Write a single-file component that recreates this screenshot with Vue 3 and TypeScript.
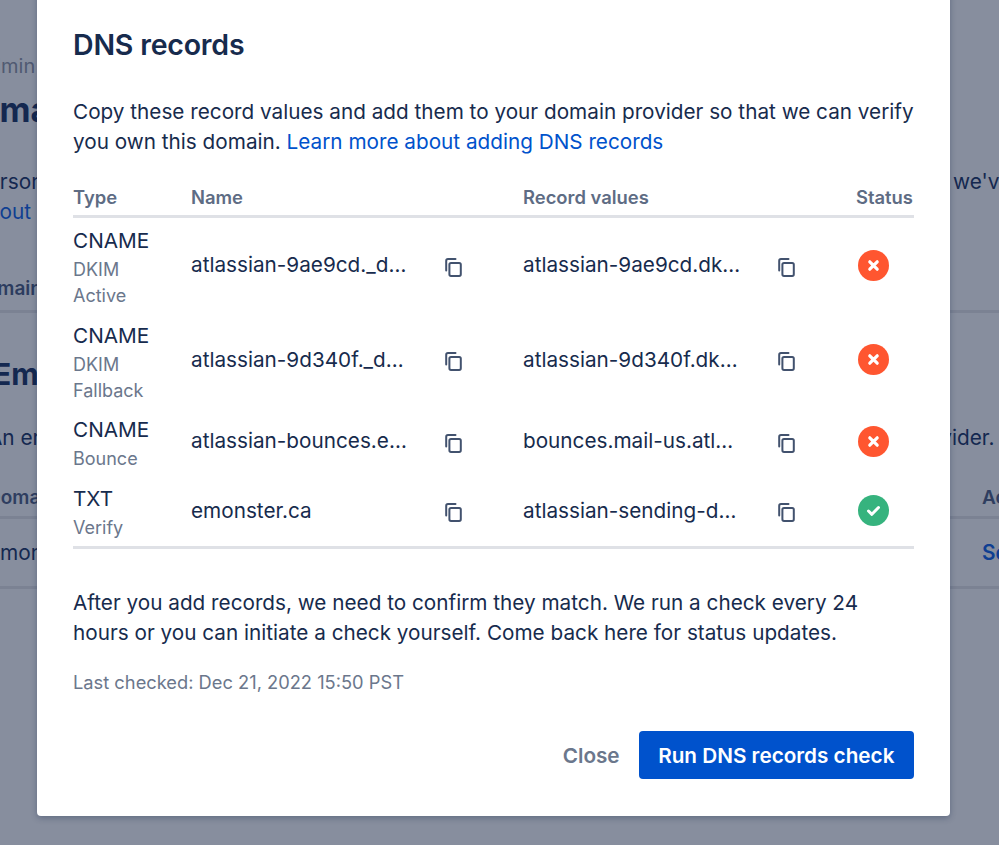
<script setup lang="ts">
interface Rec { type: string; subs: string[]; name: string; value: string; ok: boolean }
const records: Rec[] = [
  { type: 'CNAME', subs: ['DKIM', 'Active'], name: 'atlassian-9ae9cd._domainkey.emonster.ca', value: 'atlassian-9ae9cd.dkim.atlassian.net', ok: false },
  { type: 'CNAME', subs: ['DKIM', 'Fallback'], name: 'atlassian-9d340f._domainkey.emonster.ca', value: 'atlassian-9d340f.dkim.atlassian.net', ok: false },
  { type: 'CNAME', subs: ['Bounce'], name: 'atlassian-bounces.emonster.ca', value: 'bounces.mail-us.atlassian.net', ok: false },
  { type: 'TXT', subs: ['Verify'], name: 'emonster.ca', value: 'atlassian-sending-domain-verification=1', ok: true },
]
</script>

<template>
  <div class="page">
    <div class="bg">
      <div class="crumb">Admin</div>
      <h1 class="bg-h1">Domains</h1>
      <div class="bg-row intro"><span class="l-person">personal</span><span class="r-weve">we've</span></div>
      <div class="bg-row intro2"><a class="l-out">about</a></div>
      <div class="bg-row tabhead"><span class="l-mail">Domain</span></div>
      <h2 class="bg-h2">Email</h2>
      <div class="bg-row intro3"><span class="l-an">An email</span><span class="r-vider">provider.</span></div>
      <div class="bg-row thead"><span class="l-dom">Domain</span><span class="r-ac">Actions</span></div>
      <div class="bg-row tbody"><span class="l-emon">emonster</span><a class="r-se">See</a></div>
    </div>

    <section class="modal">
      <h3 class="title">DNS records</h3>
      <p class="para">
        Copy these record values and add them to your domain provider so that we can verify
        you own this domain. <a class="link">Learn more about adding DNS records</a>
      </p>
      <table class="table">
        <colgroup>
          <col class="c-type" /><col class="c-name" /><col class="c-copy" />
          <col class="c-value" /><col class="c-copy2" /><col class="c-status" />
        </colgroup>
        <thead>
          <tr>
            <th>Type</th><th>Name</th><th></th><th>Record values</th><th></th><th>Status</th>
          </tr>
        </thead>
        <tbody>
          <tr v-for="r in records" :key="r.name">
            <td class="type">
              <div class="main">{{ r.type }}</div>
              <div v-for="s in r.subs" :key="s" class="sub">{{ s }}</div>
            </td>
            <td><div class="trunc">{{ r.name }}</div></td>
            <td class="icon-cell">
              <svg class="copy" width="17" height="19" viewBox="0 0 17 19" fill="none" stroke="#42526e" stroke-width="2" stroke-linecap="round" stroke-linejoin="round">
                <path d="M1.2 12.5V2.9C1.2 1.8 1.9 1.1 3 1.1H10.5" />
                <rect x="4.4" y="4.9" width="11.4" height="13" rx="1.6" />
              </svg>
            </td>
            <td><div class="trunc">{{ r.value }}</div></td>
            <td class="icon-cell">
              <svg class="copy" width="17" height="19" viewBox="0 0 17 19" fill="none" stroke="#42526e" stroke-width="2" stroke-linecap="round" stroke-linejoin="round">
                <path d="M1.2 12.5V2.9C1.2 1.8 1.9 1.1 3 1.1H10.5" />
                <rect x="4.4" y="4.9" width="11.4" height="13" rx="1.6" />
              </svg>
            </td>
            <td class="status-cell">
              <svg width="31" height="31" viewBox="0 0 31 31">
                <circle cx="15.5" cy="15.5" r="15.5" :fill="r.ok ? '#36b37e' : '#ff5630'" />
                <path v-if="r.ok" d="M10.5 16l3.4 3.3 6.6-6.8" fill="none" stroke="#fff" stroke-width="3" stroke-linecap="round" stroke-linejoin="round" />
                <path v-else d="M11.8 11.8l7.4 7.4M19.2 11.8l-7.4 7.4" fill="none" stroke="#fff" stroke-width="3.2" stroke-linecap="round" />
              </svg>
            </td>
          </tr>
        </tbody>
      </table>
      <p class="para after">
        After you add records, we need to confirm they match. We run a check every 24
        hours or you can initiate a check yourself. Come back here for status updates.
      </p>
      <p class="checked">Last checked: Dec 21, 2022 15:50 PST</p>
      <div class="actions">
        <button class="btn-close" type="button">Close</button>
        <button class="btn-run" type="button">Run DNS records check</button>
      </div>
    </section>
  </div>
</template>

<style scoped>
.page {
  position: relative;
  width: 999px;
  height: 845px;
  overflow: hidden;
  background: #878e9e;
  font-family: Inter, "Noto Sans", sans-serif;
  color: #142850;
}
.bg { display: flex; flex-direction: column; font-size: 20.8px; line-height: 30px; }
.crumb { margin: 51px 0 0 -25px; color: #505a72; font-size: 20px; }
.bg-h1 { margin: 7px 0 0 -46px; font-size: 34px; line-height: 44px; font-weight: 700; color: #142850; }
.bg-row { display: flex; justify-content: space-between; white-space: nowrap; }
.intro { margin-top: 35px; }
.tabhead { margin-top: 47px; padding-bottom: 6px; border-bottom: 3px solid #7b8293; font-weight: 600; color: #2c3c5e; font-size: 19px; }
.bg-h2 { margin: 41px 0 0 -7px; font-size: 30px; line-height: 40px; font-weight: 700; color: #142850; }
.intro3 { margin-top: 29px; }
.thead { margin-top: 30px; padding-bottom: 3px; border-bottom: 3px solid #7b8293; font-weight: 600; color: #2f3e60; font-size: 19px; }
.tbody { padding: 19px 0 18px; border-bottom: 3px solid #7b8293; }
.l-person { margin-left: -25px; }
.l-out { margin-left: -25px; color: #0f3f92; }
.l-mail { margin-left: -28px; }
.l-an { margin-left: -12px; }
.l-dom { margin-left: -13px; }
.l-emon { margin-left: -12px; }
.r-weve { width: 46px; }
.r-vider { width: 91px; }
.r-ac { width: 17px; }
.r-se { width: 17px; color: #0f3f92; font-weight: 600; }

.modal {
  position: absolute;
  left: 37px;
  top: -30px;
  width: 913px;
  box-sizing: border-box;
  padding: 56px 36px 37px 36px;
  background: #fff;
  border-radius: 4px;
  box-shadow: 0 2px 6px rgba(9, 30, 66, 0.3);
}
.title { margin: 0; font-size: 28.5px; line-height: 38px; font-weight: 600; color: #172b4d; letter-spacing: -0.2px; }
.para { margin: 33px 0 0; font-size: 20.72px; line-height: 30px; color: #172b4d; }
.link { color: #0052cc; }
.table { width: 841px; margin-top: 27px; border-collapse: collapse; table-layout: fixed; }
.c-type { width: 118px; }
.c-name { width: 254px; }
.c-copy { width: 78px; }
.c-value { width: 255px; }
.c-copy2 { width: 78px; }
.c-status { width: 58px; }
th {
  padding: 0 0 5px;
  text-align: left;
  font-size: 18.4px;
  line-height: 26px;
  font-weight: 600;
  color: #5e6c84;
  border-bottom: 3px solid #dfe1e6;
}
td { padding: 0; font-size: 20.72px; line-height: 28px; color: #172b4d; vertical-align: middle; }
.type { padding: 9px 0 3.5px; }
.main { margin-bottom: 2px; }
.sub { font-size: 18px; line-height: 26px; color: #6b778c; }
.trunc { width: 219px; white-space: nowrap; overflow: hidden; text-overflow: ellipsis; }
.icon-cell { line-height: 0; }
.copy { display: block; margin-top: 4px; }
.status-cell { line-height: 0; padding-left: 2px; }
.status-cell svg { display: block; }
tbody tr:last-child td { border-bottom: 3px solid #dfe1e6; }
tbody tr:last-child .type { padding-bottom: 5.5px; }
.after { margin-top: 39px; }
.checked { margin: 21px 0 0; font-size: 18.3px; line-height: 26px; color: #6b778c; }
.actions { display: flex; justify-content: flex-end; align-items: center; gap: 19px; margin-top: 36px; }
.btn-close, .btn-run { border: 0; font: inherit; font-size: 20.72px; font-weight: 600; }
.btn-close { background: none; padding: 0; color: #6b778c; }
.btn-run { height: 48px; padding: 0 19.5px; background: #0052cc; color: #fff; border-radius: 4px; }
</style>
